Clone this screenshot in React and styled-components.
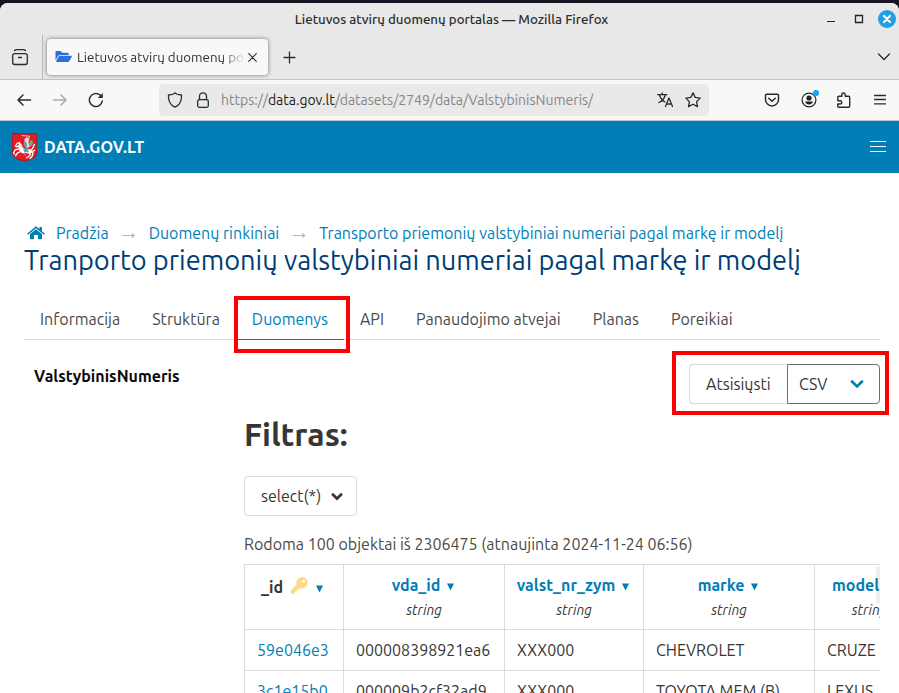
import React from 'react';
import styled, { createGlobalStyle, css } from 'styled-components';

const Global = createGlobalStyle`
  * { box-sizing: border-box; }
  body {
    margin: 0;
    overflow: hidden;
    background: #fff;
    font-family: Ubuntu, "Noto Sans", sans-serif;
    font-size: 16px;
    line-height: 24px;
    color: #363636;
    white-space: nowrap;
  }
`;

const Desktop = styled.div`
  width: 899px;
  height: 693px;
  padding-top: 3px;
  overflow: hidden;
  background: #15131f;
`;
const Window = styled.div`
  height: 690px;
  display: flex;
  flex-direction: column;
  overflow: hidden;
  background: #fff;
  border-radius: 8px 8px 0 0;
`;

const TitleBar = styled.header`
  flex: none;
  height: 32px;
  padding-right: 3px;
  display: grid;
  grid-template-columns: 1fr auto 1fr;
  align-items: center;
  background: #e8e8e8;
`;
const WindowTitle = styled.div`
  grid-column: 2;
  margin-left: 7px;
  padding-top: 2px;
  font-size: 13.3px;
  font-weight: 500;
  color: #2d2d2d;
`;
const WindowButtons = styled.div`
  justify-self: end;
  display: flex;
  align-items: center;
`;

const TabStrip = styled.div`
  flex: none;
  height: 45px;
  display: flex;
  align-items: center;
  background: #e8e8e8;
  border-bottom: 1px solid #c4c4c4;
`;
const ViewButton = styled.div`
  width: 43px;
  height: 44px;
  padding: 0 1px 0 11px;
  display: flex;
  align-items: center;
  border-right: 1px solid #b9b9b9;
`;
const BrowserTab = styled.div`
  width: 221px;
  height: 36px;
  margin: 0 0 0 4px;
  padding: 0 11px 0 8px;
  display: flex;
  align-items: center;
  background: #f8f8f8;
  border-radius: 4px;
  box-shadow: 0 0 4px rgba(0, 0, 0, 0.5);
  svg { flex: none; }
`;
const TabLabel = styled.div`
  width: 168px;
  margin: 1px 3px 0 5px;
  overflow: hidden;
  font-size: 13.33px;
  color: #303035;
  mask-image: linear-gradient(to right, #000 144px, transparent 168px);
`;
const TabStripEnd = styled.div`
  flex: 1;
  padding: 0 8px 0 14px;
  display: flex;
  align-items: center;
  justify-content: space-between;
`;

const NavBar = styled.nav`
  flex: none;
  height: 41px;
  padding: 0 11px 0 16px;
  display: flex;
  align-items: center;
  background: #f8f8f8;
  border-bottom: 1px solid #bfc7cb;
`;
const NavButtons = styled.div`
  width: 143px;
  display: flex;
  gap: 20px;
`;
const UrlBar = styled.div`
  width: 550px;
  height: 32px;
  padding: 0 8px;
  display: flex;
  align-items: center;
  background: #e9e9e9;
  border-radius: 4px;
`;
const UrlIcons = styled.div`
  display: flex;
  gap: 12px;
`;
const Url = styled.div`
  flex: 1;
  margin-left: 10px;
  font-size: 14px;
  color: #85858a;
`;
const UrlHost = styled.span`
  color: #1c1c20;
`;
const BrowserTools = styled.div`
  flex: 1;
  display: flex;
  align-items: center;
  justify-content: flex-end;
  gap: 19.7px;
`;
const AccountButton = styled.div`
  display: flex;
  margin: -2px -3px 0 0;
`;

const SiteHeader = styled.header`
  flex: none;
  height: 52px;
  padding: 0 13px 0 12px;
  display: flex;
  align-items: center;
  justify-content: space-between;
  background: #007eb5;
`;
const Brand = styled.div`
  display: flex;
  align-items: center;
  gap: 7px;
  color: #fff;
  font-weight: 600;
  letter-spacing: 0.1px;
`;

const Page = styled.main`
  padding: 48px 19px 0 24px;
  background: #fff;
`;
const Breadcrumb = styled.nav`
  height: 24px;
  padding-left: 3px;
  display: flex;
  align-items: center;
  svg { flex: none; }
`;
const Crumb = styled.a`
  color: #007eb5;
`;
const Separator = styled.span`
  width: 40px;
  padding-bottom: 3px;
  text-align: center;
  font-family: "Liberation Sans", sans-serif;
  font-size: 21px;
  color: #b5b5b5;
`;
const PageTitle = styled.h1`
  margin: 0;
  font-size: 27.2px;
  font-weight: 400;
  line-height: 31px;
  color: #003d75;
`;
const Tabs = styled.div`
  height: 41px;
  margin-top: 23px;
  display: flex;
  border-bottom: 1px solid #dbdbdb;
`;
const PageTab = styled.a`
  height: 41px;
  padding: 8px 16px;
  color: #4a4a4a;
  ${(p) => p.$active && css`
    color: #007eb5;
    border-bottom: 1px solid #007eb5;
  `}
`;

const Columns = styled.section`
  margin-top: 24px;
  display: grid;
  grid-template-columns: 220px minmax(0, 1fr);
`;
const ModelName = styled.div`
  padding: 0 10px;
  font-weight: 600;
  color: #0a0a0a;
`;
const Content = styled.div`
  overflow: hidden;
`;
const DownloadGroup = styled.div`
  display: flex;
  justify-content: flex-end;
`;
const DownloadLabel = styled.div`
  width: 98px;
  height: 40px;
  padding: 7px 16px;
  border: 1px solid #dbdbdb;
  border-right: 0;
  border-radius: 4px 0 0 4px;
`;
const FormatSelect = styled.div`
  width: 93px;
  height: 40px;
  padding: 7px 15px 7px 11px;
  display: flex;
  align-items: center;
  justify-content: space-between;
  border: 1px solid #6f6f6f;
  border-radius: 0 4px 4px 0;
`;
const FilterTitle = styled.h2`
  margin: 12px 0 0;
  font-size: 32px;
  font-weight: 600;
  line-height: 36px;
`;
const FilterSelect = styled.div`
  width: 113px;
  height: 40px;
  margin-top: 24px;
  padding: 0 13px 0 16px;
  display: flex;
  align-items: center;
  justify-content: space-between;
  border: 1px solid #dbdbdb;
  border-radius: 4px;
`;
const Summary = styled.p`
  margin: 16px 0 8px;
  color: #4a4a4a;
`;
const TableScroll = styled.div`
  position: relative;
  overflow: hidden;
`;
/* Idle overlay scrollbar at the table's right edge. */
const ScrollHint = styled.div`
  position: absolute;
  top: 2px;
  right: 0;
  width: 4px;
  height: 38px;
  background: rgba(0, 0, 0, 0.06);
`;
const Table = styled.table`
  width: 681px;
  table-layout: fixed;
  border-collapse: collapse;
`;
const HeadCell = styled.th`
  width: ${(p) => p.$width}px;
  height: 65px;
  padding: 8px 12px;
  vertical-align: top;
  border: 1px solid #dbdbdb;
  font-weight: 600;
  color: #007eb5;
`;
const KeyHead = styled.div`
  height: 28px;
  margin-right: 4px;
  display: flex;
  align-items: center;
  justify-content: center;
  gap: 8px;
  color: #363636;
`;
const FieldName = styled.div`
  margin-right: 2px;
  display: flex;
  align-items: center;
  justify-content: center;
  gap: 7px;
`;
const SortMark = styled.span`
  display: flex;
  padding-top: 3px;
`;
const KeyMark = styled.span`
  display: flex;
  padding-bottom: 3px;
`;
const FieldType = styled.div`
  padding-top: 2px;
  font-size: 14px;
  font-weight: 400;
  font-style: italic;
  line-height: 22px;
  color: #363636;
`;
const Cell = styled.td`
  height: 41px;
  padding: 8px 12px;
  border: 1px solid #dbdbdb;
  color: ${(p) => (p.$link ? '#007eb5' : '#363636')};
`;

/* Hand-drawn emphasis frame laid over the page. */
const Highlight = styled.div`
  position: absolute;
  left: ${(p) => p.$x}px;
  top: ${(p) => p.$y}px;
  width: ${(p) => p.$w}px;
  height: ${(p) => p.$h}px;
  border: 4px solid #fe0000;
`;

const Icon = ({ size = 16, w = size, h = size, box = `0 0 ${w} ${h}`, children, ...rest }) => (
  <svg width={w} height={h} viewBox={box} fill="none" stroke="#2b2a33" strokeWidth="1.3" strokeLinecap="round" strokeLinejoin="round" {...rest}>{children}</svg>
);
const Chevron = ({ color, w = 14, h = 10, weight = 2.6 }) => (
  <Icon w={w} h={h} box="0 0 14 10" stroke={color} strokeWidth={weight} strokeLinecap="butt" strokeLinejoin="miter"><path d="M1.2 1.8 7 7.4l5.8-5.6" /></Icon>
);
const SortArrow = () => (
  <SortMark><Icon w={7} h={8} stroke="none" fill="#007eb5"><path d="M0 .5h7L3.500 7.500z" /></Icon></SortMark>
);
const CoatOfArms = () => (
  <Icon w={25} h={29} stroke="none">
    <path d="M0 .5h25V19c0 6-6 8-12.500 9.500C6 27 0 25 0 19z" fill="#e21d27" />
    <path d="M.4.9h24.200V19c0 5.700-6 7.700-12.100 9.100C6.400 26.700.4 24.700.4 19z" stroke="#8b1a20" strokeWidth=".8" />
    <path d="M7.500 9.500 5.200 10.300 3.500 13l1.200.9 2.300-1 .8 2.600M8 16l-4.500.6L1.500 19.500l.8 1.500M9 18.500l-3.500 1.300-2 3M16 19l2.500 2.200-1.500 2 -2.500 1.500M18 18l3 2-1 3.500-2 2" stroke="#fff" strokeWidth="1.300" />
    <path d="M7 9.500 9.500 11l1.500 4 4 1.500 4-.5 1.500 3-2.500 2-3.500-1-4 .5L7.500 18 6.500 14z" fill="#fff" />
    <path d="M19.500 16.500c2.500-1.500 1.500-4 3-5M20 18.500l2.700-1.200" stroke="#fff" strokeWidth="1.300" />
    <path d="m10.200 2.600 7.300.6-1 3.600" stroke="#d9dde0" strokeWidth=".9" />
    <path d="m12.500 6 2.500-2 2 2-.5 3.500 1.500 4-3 1.500-2.500-2z" fill="#dce3e6" />
    <path d="m12.500 8 2 1.500 1 4-2 .5-2-2z" fill="#6f97ab" />
    <path d="m17.500 8 3-.8.3 4-1.500 2-1.800-1.500z" fill="#3f9fd0" />
    <path d="M11 15.500h4.500l1.500 4-2.500-.5-2 .8z" fill="#5aa3c7" />
    <path d="M18.900 7.600v5M17.700 9.800h3M8.500 13l3 1.500M15.500 15.500l3 1.500M12.500 20l1 2.500" stroke="#d0a845" strokeWidth=".8" />
  </Icon>
);

const pageTabs = ['Informacija', 'Struktūra', 'Duomenys', 'API', 'Panaudojimo atvejai', 'Planas', 'Poreikiai'];
const fields = [['vda_id', 161], ['valst_nr_zym', 139], ['marke', 171], ['modelis', 110]];
const rows = [
  ['59e046e3', '000008398921ea6', 'XXX000', 'CHEVROLET', 'CRUZE'],
  ['3c1e15b0', '000009b2cf32ad9', 'XXX000', 'TOYOTA MEM (B)', 'LEXUS'],
];

export default function App() {
  return (
    <Desktop>
      <Global />
      <Window>
        <TitleBar>
          <WindowTitle>Lietuvos atvirų duomenų portalas — Mozilla Firefox</WindowTitle>
          <WindowButtons>
            <Icon w={61} h={18} strokeLinecap="butt" strokeLinejoin="miter">
              <path d="M10 11.500h8" stroke="#222" strokeWidth="1" />
              <path d="M38.500 5.500h7v7h-7z" stroke="#222" />
            </Icon>
            <Icon size={18} stroke="#fff" strokeWidth="2.200"><circle cx="9" cy="9" r="9" fill="#229fe0" stroke="none" /><path d="m6 6 6 6m0-6-6 6" /></Icon>
          </WindowButtons>
        </TitleBar>

        <TabStrip>
          <ViewButton>
            <Icon w={18} h={18}><rect x="1.700" y="5.700" width="14.600" height="10.800" rx="2" /><path d="M3.500 2.700C4 1.900 4.500 1.700 5.500 1.700h7c1 0 1.500.2 2 1M7.500 9.500h3" /></Icon>
          </ViewButton>
          <BrowserTab>
            <Icon w={17} h={12} stroke="none" fill="#2d6fdb"><path d="M1.200 0h4.300L7.300 1.700h5.200c.8 0 1.200.5 1.200 1.200v1H4.800c-.8 0-1.300.3-1.700 1L.5 9.500V1C.5.4.7 0 1.200 0z" /><path d="M4.800 4.800h11.400c.6 0 .8.4.5.9l-2.500 4.500c-.3.6-.7.8-1.300.8H1.700c-.6 0-.8-.4-.5-.9l2.500-4.500c.2-.5.6-.8 1.100-.8z" /></Icon>
            <TabLabel>Lietuvos atvirų duomenų portalas</TabLabel>
            <Icon w={9} h={9} strokeWidth="1.100"><path d="m.7.7 7.600 7.600m0-7.600L.7 8.300" /></Icon>
          </BrowserTab>
          <TabStripEnd>
            <Icon w={15} h={15}><path d="M7.500 2v11M2 7.500h11" /></Icon>
            <Icon w={14} h={8}><path d="m1.500 1 5.500 5.500L12.500 1" /></Icon>
          </TabStripEnd>
        </TabStrip>

        <NavBar>
          <NavButtons>
            <Icon strokeWidth="1.500"><path d="M14.500 8H2M7 3 2 8l5 5" /></Icon>
            <Icon stroke="#a9a9ac" strokeWidth="1.500"><path d="M1.500 8H14M9 3l5 5-5 5" /></Icon>
            <Icon strokeWidth="1.500"><path d="M14.300 9A6.500 6.500 0 1 1 12 3l1.500 1.500" /><path d="M14.800 1v5h-5z" fill="#2b2a33" stroke="none" /></Icon>
          </NavButtons>
          <UrlBar>
            <UrlIcons>
              <Icon><path d="M8 .9c1.500 1.500 4 2.100 6.500 2.100.3 5.500-1.500 10-6.500 12.200C3 13 1.200 8.500 1.500 3 4 3 6.500 2.400 8 .9z" /></Icon>
              <Icon><rect x="2.700" y="7.700" width="10.600" height="7.600" rx="1.500" /><path d="M4.500 7.500V4.300a3.500 3.500 0 0 1 7 0v3.200" /></Icon>
            </UrlIcons>
            <Url>https://<UrlHost>data.gov.lt</UrlHost>/datasets/2749/data/ValstybinisNumeris/</Url>
            <UrlIcons>
              <Icon><path d="M.8 2.700h9M5.200 1v1.700M2.500 3c1 3.500 3.500 6 5.500 7M8.300 3c-1 3.500-4 6.500-6.500 7.500M8.500 14.500 12 6l3.500 8.500M9.500 12h5" /></Icon>
              <Icon><path d="m8 .9 2.200 4.500 5 .7-3.600 3.500.9 5L8 12.200l-4.500 2.400.9-5L.8 6.100l5-.7z" /></Icon>
            </UrlIcons>
          </UrlBar>
          <BrowserTools>
            <Icon strokeWidth="1.500"><path d="M2.700 2.200h10.600c.8 0 1.200.5 1.200 1.200v4a6.500 6.500 0 0 1-13 0v-4c0-.7.4-1.200 1.200-1.200z" /><path d="m4.700 6.200 3.300 3 3.300-3" /></Icon>
            <AccountButton><Icon w={20} h={18}><circle cx="9" cy="10" r="6.900" /><circle cx="9" cy="8" r="2.600" fill="#222" stroke="none" /><path d="M5 11.500h8c-.6 2-2 3-4 3s-3.400-1-4-3z" fill="#222" stroke="none" /><circle cx="16" cy="3" r="3.100" fill="#13a9f4" stroke="none" /></Icon></AccountButton>
            <Icon strokeWidth="1.400"><path d="M1.800 6.800V5.300c0-.6.400-1 1-1h3V2.700a1.700 1.700 0 0 1 3.400 0v1.600h3.500c.6 0 1 .4 1 1v9c0 .6-.4 1-1 1H2.800c-.6 0-1-.4-1-1V12h2.400a1.500 1.500 0 0 0 0-3.200H1.800z" /></Icon>
            <Icon strokeLinecap="butt"><path d="M2 3.500h12M2 7.500h12M2 11.800h12" /></Icon>
          </BrowserTools>
        </NavBar>

        <SiteHeader>
          <Brand><CoatOfArms />DATA.GOV.LT</Brand>
          <Icon w={16} h={12} stroke="#fff" strokeWidth="1" strokeLinecap="butt"><path d="M0 .5h16M0 5.500h16M0 10.500h16" /></Icon>
        </SiteHeader>

        <Page>
          <Breadcrumb>
            <Icon w={29} h={16} stroke="none" fill="#007eb5"><path d="M9 4.300 15 9v5.300H11V10H7v4.300H3V9z" /><path d="m0 8.700 9-7.500 3.500 2.900V2H15v4.200l3 2.500-1 1.100-8-6.600-8 6.600z" /></Icon>
            <Crumb>Pradžia</Crumb><Separator>→</Separator>
            <Crumb>Duomenų rinkiniai</Crumb><Separator>→</Separator>
            <Crumb>Transporto priemonių valstybiniai numeriai pagal markę ir modelį</Crumb>
          </Breadcrumb>
          <PageTitle>Tranporto priemonių valstybiniai numeriai pagal markę ir modelį</PageTitle>
          <Tabs>
            {pageTabs.map((name) => <PageTab key={name} $active={name === 'Duomenys'}>{name}</PageTab>)}
          </Tabs>
          <Columns>
            <ModelName>ValstybinisNumeris</ModelName>
            <Content>
              <DownloadGroup>
                <DownloadLabel>Atsisiųsti</DownloadLabel>
                <FormatSelect>CSV<Chevron color="#007eb5" /></FormatSelect>
              </DownloadGroup>
              <FilterTitle>Filtras:</FilterTitle>
              <FilterSelect>select(*)<Chevron color="#363636" w={12} h={9} weight={3.1} /></FilterSelect>
              <Summary>Rodoma 100 objektai iš 2306475 (atnaujinta 2024-11-24 06:56)</Summary>
              <TableScroll>
                <Table>
                  <thead>
                    <tr>
                      <HeadCell $width={99}>
                        <KeyHead>
                          _id
                          <KeyMark><Icon w={17} h={17} stroke="none" fill="#ffdc82"><path fillRule="evenodd" d="M11 0a5.700 5.700 0 0 0-5.300 7.500L0 13.200V16.500h4v-2h2v-2h2l1.200-1.400A5.700 5.700 0 1 0 11 0zm1.500 2.800a1.500 1.500 0 1 1 0 3 1.500 1.500 0 0 1 0-3z" /></Icon></KeyMark>
                          <SortArrow />
                        </KeyHead>
                      </HeadCell>
                      {fields.map(([name, width]) => (
                        <HeadCell key={name} $width={width}>
                          <FieldName>{name}<SortArrow /></FieldName>
                          <FieldType>string</FieldType>
                        </HeadCell>
                      ))}
                    </tr>
                  </thead>
                  <tbody>
                    {rows.map((row) => (
                      <tr key={row[0]}>{row.map((value, i) => <Cell key={i} $link={i === 0}>{value}</Cell>)}</tr>
                    ))}
                  </tbody>
                </Table>
                <ScrollHint />
              </TableScroll>
            </Content>
          </Columns>
        </Page>
      </Window>
      <Highlight $x={234} $y={296} $w={116} $h={57} />
      <Highlight $x={672} $y={351} $w={217} $h={64} />
    </Desktop>
  );
}
